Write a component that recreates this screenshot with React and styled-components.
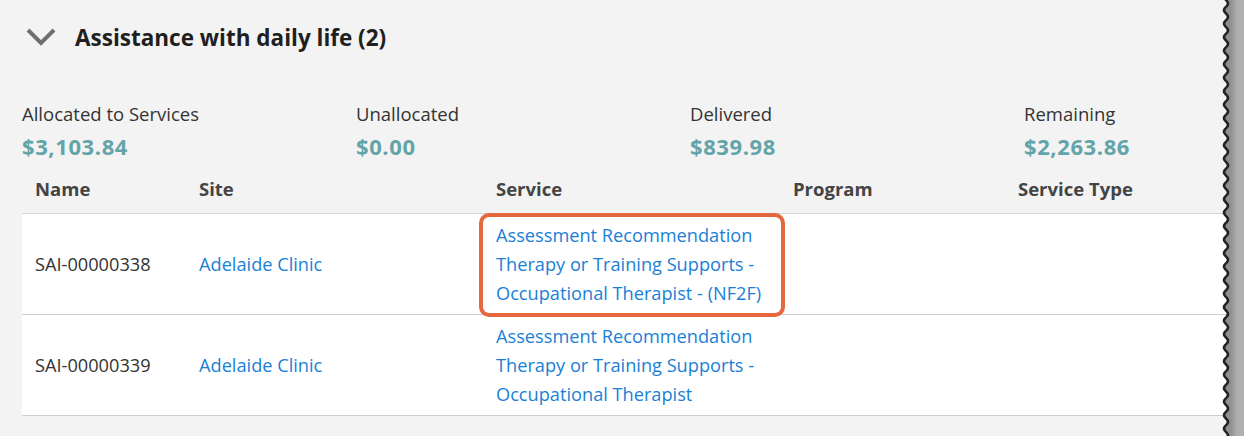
import React from 'react'
import styled, { createGlobalStyle } from 'styled-components'

const GlobalStyle = createGlobalStyle`
  html, body {
    margin: 0;
    padding: 0;
    background: #f3f3f3;
  }
  body {
    font-family: "Open Sans", "Noto Sans", Arial, sans-serif;
  }
`

const Page = styled.div`
  position: relative;
  width: 1244px;
  height: 436px;
  overflow: hidden;
  background: #f3f3f3;
`

const Panel = styled.div`
  padding: 18px 0 0 22px;
  display: flex;
  flex-direction: column;
`

const SectionHeader = styled.div`
  display: flex;
  align-items: center;
  gap: 19px;
  height: 38px;
  padding-left: 4px;
`

const SectionTitle = styled.h2`
  margin: 0;
  font-size: 22.5px;
  font-weight: 700;
  color: #1f1f1f;
`

const Stats = styled.div`
  display: grid;
  grid-template-columns: repeat(4, 334px);
  margin-top: 45px;
`

const Stat = styled.div`
  display: flex;
  flex-direction: column;
`

const StatLabel = styled.span`
  font-size: 18.5px;
  line-height: 26px;
  color: #333;
`

const StatValue = styled.span`
  font-size: 22px;
  line-height: 28px;
  margin-top: 5px;
  font-weight: 700;
  letter-spacing: 0.6px;
  color: #63a4a9;
`

const Table = styled.div`
  display: flex;
  flex-direction: column;
  margin-top: 3px;
`

const Row = styled.div`
  display: grid;
  grid-template-columns: 164px 297px 297px 225px 1fr;
  align-items: center;
  background: ${p => (p.head ? 'transparent' : '#fff')};
  border-bottom: 1px solid ${p => (p.head ? '#d4d4d4' : '#cfcfcf')};
  min-height: ${p => (p.head ? '50px' : '100px')};
`

const HeadCell = styled.div`
  padding-left: 13px;
  font-size: 18.5px;
  font-weight: 700;
  color: #444;
`

const Cell = styled.div`
  position: relative;
  padding: 6px 13px;
  font-size: 18.2px;
  line-height: 29px;
  color: ${p => (p.link ? '#1a7fd7' : '#333')};
  align-self: stretch;
  display: flex;
  align-items: center;
  white-space: nowrap;

  ${p =>
    p.highlighted &&
    `
    &::after {
      content: '';
      position: absolute;
      inset: -1px -5px -3px -4px;
      border: 4px solid #e5673d;
      border-radius: 10px;
      pointer-events: none;
    }
  `}
`

const Edge = styled.svg`
  position: absolute;
  top: 0;
  right: 0;
  width: 24px;
  height: 436px;
`

function Chevron() {
  return (
    <svg width="30" height="18" viewBox="0 0 30 18">
      <path d="M2 2 L15 15 L28 2" fill="none" stroke="#6f6f6f" strokeWidth="4" />
    </svg>
  )
}

function wavePath(x0, amp, period, height) {
  const pts = []
  for (let y = -2; y <= height + 2; y += 1) {
    pts.push(`${(x0 + amp * Math.sin((y / period) * Math.PI * 2)).toFixed(2)} ${y}`)
  }
  return pts
}

function TornEdge() {
  const pts = wavePath(6, 2, 13.5, 436)
  const line = 'M' + pts.join(' L')
  const fill = line + ' L30 438 L30 -2 Z'
  return (
    <Edge viewBox="0 0 24 436">
      <defs>
        <linearGradient id="shade" x1="0" x2="1" y1="0" y2="0">
          <stop offset="0.25" stopColor="#909092" />
          <stop offset="0.5" stopColor="#afafb2" />
          <stop offset="1" stopColor="#b4b4b7" />
        </linearGradient>
      </defs>
      <path d={fill} fill="url(#shade)" />
      <path d={line} fill="none" stroke="#222" strokeWidth="2.6" />
    </Edge>
  )
}

const stats = [
  ['Allocated to Services', '$3,103.84'],
  ['Unallocated', '$0.00'],
  ['Delivered', '$839.98'],
  ['Remaining', '$2,263.86'],
]

const rows = [
  {
    name: 'SAI-00000338',
    site: 'Adelaide Clinic',
    service: ['Assessment Recommendation', 'Therapy or Training Supports -', 'Occupational Therapist - (NF2F)'],
    highlighted: true,
  },
  {
    name: 'SAI-00000339',
    site: 'Adelaide Clinic',
    service: ['Assessment Recommendation', 'Therapy or Training Supports -', 'Occupational Therapist'],
  },
]

export default function App() {
  return (
    <Page>
      <GlobalStyle />
      <Panel>
        <SectionHeader>
          <Chevron />
          <SectionTitle>Assistance with daily life (2)</SectionTitle>
        </SectionHeader>
        <Stats>
          {stats.map(([label, value]) => (
            <Stat key={label}>
              <StatLabel>{label}</StatLabel>
              <StatValue>{value}</StatValue>
            </Stat>
          ))}
        </Stats>
        <Table>
          <Row head>
            <HeadCell>Name</HeadCell>
            <HeadCell>Site</HeadCell>
            <HeadCell>Service</HeadCell>
            <HeadCell>Program</HeadCell>
            <HeadCell>Service Type</HeadCell>
          </Row>
          {rows.map(r => (
            <Row key={r.name}>
              <Cell>{r.name}</Cell>
              <Cell link>{r.site}</Cell>
              <Cell link highlighted={r.highlighted}>
                <div>
                  {r.service.map(l => (
                    <div key={l}>{l}</div>
                  ))}
                </div>
              </Cell>
              <Cell />
              <Cell />
            </Row>
          ))}
        </Table>
      </Panel>
      <TornEdge />
    </Page>
  )
}
